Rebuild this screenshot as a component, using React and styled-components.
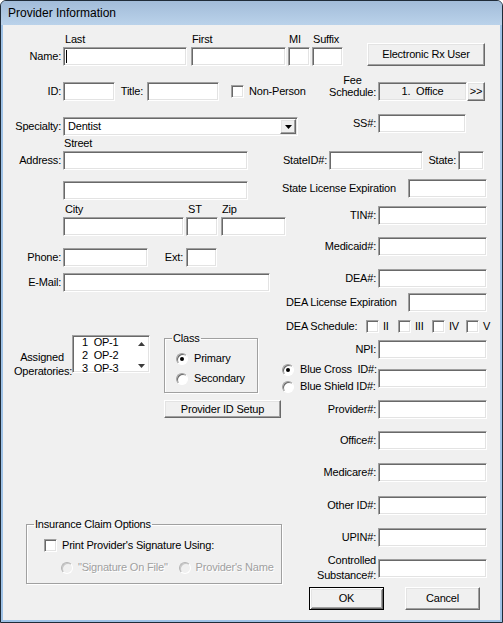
import React from "react";
import styled, { createGlobalStyle, css } from "styled-components";

const GlobalStyle = createGlobalStyle`
  html, body {
    margin: 0;
    padding: 0;
    background: #ffffff;
  }
  body {
    font-family: "Liberation Sans", Arial, sans-serif;
  }
`;

const sunken = css`
  border: 1px solid;
  border-color: #a0a0a0 #ffffff #ffffff #a0a0a0;
  box-shadow: inset 1px 1px 0 #696969, inset -1px -1px 0 #e3e3e3;
`;

const raised = css`
  border: 1px solid;
  border-color: #ffffff #696969 #696969 #ffffff;
  box-shadow: inset -1px -1px 0 #a0a0a0, inset 1px 1px 0 #e3e3e3;
`;

const Window = styled.div`
  width: 503px;
  height: 623px;
  box-sizing: border-box;
  border: 1px solid #1f2b38;
  border-radius: 6px 6px 0 0;
  background: #9fc2e6;
  display: flex;
  flex-direction: column;
  overflow: hidden;
`;

const TitleBar = styled.div`
  flex: none;
  height: 24px;
  display: flex;
  align-items: center;
  padding-left: 7px;
  background: linear-gradient(#a2bcd9, #bad2ea);
  font-size: 12px;
  color: #000;
`;

const Client = styled.div`
  flex: 1;
  margin: 0 2px 2px;
  background: #f0f0f0;
  font-size: 11px;
  line-height: 13px;
  letter-spacing: -0.2px;
  color: #000;
`;

const Row = styled.div`
  display: flex;
  align-items: ${(p) => p.$align || "center"};
  margin-top: ${(p) => p.$top || 0}px;
  ${(p) => p.$h && `height: ${p.$h}px;`}
`;

const Columns = styled.div`
  display: flex;
  align-items: flex-start;
`;

const LeftCol = styled.div`
  flex: none;
  width: 277px;
  display: flex;
  flex-direction: column;
`;

const RightCol = styled.div`
  flex: 1;
  display: flex;
  flex-direction: column;
`;

const Cell = styled.div`
  flex: none;
  box-sizing: border-box;
  width: ${(p) => p.$w}px;
  margin-left: ${(p) => p.$ml || 0}px;
  margin-top: ${(p) => p.$mt || 0}px;
  padding-right: ${(p) => (p.$pr ?? 2)}px;
  padding-left: ${(p) => p.$pl || 0}px;
  padding-bottom: ${(p) => p.$pb || 0}px;
  text-align: ${(p) => p.$align || "right"};
  line-height: ${(p) => p.$lh || 13}px;
  white-space: pre;
`;

const Stack = styled.div`
  flex: none;
  display: flex;
  flex-direction: column;
  margin-left: ${(p) => p.$ml || 0}px;
`;

const Caption = styled.div`
  height: 14px;
  padding-left: ${(p) => (p.$pl ?? 2)}px;
  white-space: nowrap;
`;

const Edit = styled.div`
  flex: none;
  box-sizing: border-box;
  width: ${(p) => p.$w}px;
  height: ${(p) => p.$h || 19}px;
  margin-left: ${(p) => p.$ml || 0}px;
  background: ${(p) => (p.$grey ? "#f0f0f0" : "#ffffff")};
  display: flex;
  align-items: center;
  justify-content: ${(p) => (p.$center ? "center" : "flex-start")};
  white-space: pre;
  ${sunken}
`;

const Caret = styled.span`
  width: 1px;
  height: 13px;
  margin-left: 2px;
  background: #000;
`;

const Button = styled.div`
  flex: none;
  box-sizing: border-box;
  width: ${(p) => p.$w}px;
  height: ${(p) => p.$h || 23}px;
  margin-left: ${(p) => p.$ml || 0}px;
  margin-top: ${(p) => p.$mt || 0}px;
  align-self: ${(p) => p.$self || "auto"};
  display: flex;
  align-items: center;
  justify-content: center;
  background: #f0f0f0;
  white-space: pre;
  ${raised}
  ${(p) =>
    p.$default &&
    css`
      border-color: #000;
      box-shadow: inset 1px 1px 0 #ffffff, inset -1px -1px 0 #696969,
        inset 2px 2px 0 #e3e3e3, inset -2px -2px 0 #a0a0a0;
    `}
`;

const Check = styled.span`
  flex: none;
  box-sizing: border-box;
  width: 13px;
  height: 13px;
  margin-left: ${(p) => p.$ml || 0}px;
  background: #ffffff;
  ${sunken}
`;

const Radio = styled.span`
  flex: none;
  box-sizing: border-box;
  width: 12px;
  height: 12px;
  margin-left: ${(p) => p.$ml || 0}px;
  border-radius: 50%;
  border: 1px solid;
  border-color: ${(p) =>
    p.$disabled ? "#b4b4b4 #ffffff #ffffff #b4b4b4" : "#a0a0a0 #ffffff #ffffff #a0a0a0"};
  box-shadow: inset 1px 1px 0 ${(p) => (p.$disabled ? "#c8c8c8" : "#696969")};
  background: ${(p) => (p.$disabled ? "#f0f0f0" : "#ffffff")};
  display: flex;
  align-items: center;
  justify-content: center;
`;

const Dot = styled.span`
  width: 4px;
  height: 4px;
  border-radius: 50%;
  background: #000;
`;

const Text = styled.span`
  flex: none;
  margin-left: ${(p) => p.$ml || 0}px;
  white-space: pre;
  color: ${(p) => (p.$disabled ? "#a0a0a0" : "#000")};
  ${(p) => p.$disabled && "text-shadow: 1px 1px 0 #ffffff;"}
`;

const Option = styled.div`
  flex: none;
  display: flex;
  align-items: center;
  width: ${(p) => (p.$w ? `${p.$w}px` : "auto")};
  height: ${(p) => p.$h || 13}px;
  margin-left: ${(p) => p.$ml || 0}px;
  margin-top: ${(p) => p.$mt || 0}px;
`;

const FeeLabel = styled.div`
  flex: none;
  width: 47px;
  align-self: flex-end;
  margin-bottom: 3px;
  text-align: center;
  line-height: 12px;
`;

const Combo = styled.div`
  flex: none;
  box-sizing: border-box;
  width: ${(p) => p.$w}px;
  height: 19px;
  margin-top: ${(p) => p.$mt || 0}px;
  padding: 1px;
  background: #ffffff;
  display: flex;
  align-items: stretch;
  ${sunken}
`;

const ComboText = styled.span`
  flex: 1;
  padding-left: 3px;
  line-height: 15px;
`;

const ComboArrow = styled.span`
  flex: none;
  box-sizing: border-box;
  width: 16px;
  display: flex;
  align-items: center;
  justify-content: center;
  background: #f0f0f0;
  ${raised}
`;

const ListBox = styled.div`
  flex: none;
  box-sizing: border-box;
  width: 78px;
  height: 38px;
  margin-left: 2px;
  background: #ffffff;
  display: flex;
  overflow: hidden;
  ${sunken}
`;

const ListItems = styled.div`
  flex: 1;
  padding-left: 9px;
  line-height: 13px;
  white-space: pre;
`;

const ScrollBar = styled.div`
  flex: none;
  width: 16px;
  display: flex;
  flex-direction: column;
  justify-content: space-between;
  align-items: center;
  padding: 6px 0 4px;
`;

const Group = styled.fieldset`
  flex: none;
  box-sizing: border-box;
  width: ${(p) => p.$w}px;
  height: ${(p) => p.$h}px;
  margin: ${(p) => p.$mt || 0}px 0 0 ${(p) => p.$ml || 0}px;
  padding: 0;
  min-inline-size: 0;
  border: 1px solid #a0a0a0;
  box-shadow: inset 1px 1px 0 #ffffff, 1px 1px 0 #ffffff;
`;

const Legend = styled.legend`
  margin-left: 7px;
  padding: 0 1px;
  line-height: 13px;
  font-size: 11px;
`;

const RadioStack = styled.div`
  flex: none;
  width: 98px;
  padding-bottom: 1px;
  display: flex;
  flex-direction: column;
`;

const ArrowDown = ({ color = "#000" }) => (
  <svg width="7" height="4" viewBox="0 0 7 4">
    <path d="M0 0h7L3.5 4z" fill={color} />
  </svg>
);

const ArrowUp = ({ color = "#000" }) => (
  <svg width="7" height="4" viewBox="0 0 7 4">
    <path d="M3.5 0L7 4H0z" fill={color} />
  </svg>
);

const idFields = [
  { label: "TIN#:", top: 8 },
  { label: "Medicaid#:", top: 12 },
  { label: "DEA#:", top: 13 },
];

const lowerIds = [
  { label: "Provider#:", top: 4 },
  { label: "Office#:", top: 12 },
  { label: "Medicare#:", top: 13 },
  { label: "Other ID#:", top: 14 },
  { label: "UPIN#:", top: 13 },
];

const schedules = [
  { label: "II", w: 32 },
  { label: "III", w: 34 },
  { label: "IV", w: 34 },
  { label: "V" },
];

function IdRow({ label, top }) {
  return (
    <Row $top={top}>
      <Cell $w={98}>{label}</Cell>
      <Edit $w={109} />
    </Row>
  );
}

export default function App() {
  return (
    <>
      <GlobalStyle />
      <Window>
        <TitleBar>Provider Information</TitleBar>
        <Client>
          {/* name */}
          <Row $top={8} $align="flex-end">
            <Cell $w={60} $lh={19}>Name:</Cell>
            <Stack>
              <Caption>Last</Caption>
              <Edit $w={124}>
                <Caret />
              </Edit>
            </Stack>
            <Stack $ml={4}>
              <Caption $pl={1}>First</Caption>
              <Edit $w={95} />
            </Stack>
            <Stack $ml={2}>
              <Caption $pl={1}>MI</Caption>
              <Edit $w={22} />
            </Stack>
            <Stack $ml={2}>
              <Caption $pl={1}>Suffix</Caption>
              <Edit $w={31} />
            </Stack>
            <Button $w={118} $ml={24} $mt={10} $self="flex-start">
              Electronic Rx User
            </Button>
          </Row>

          {/* id / title / fee schedule */}
          <Row $top={16} $h={19}>
            <Cell $w={60}>ID:</Cell>
            <Edit $w={52} />
            <Cell $w={32} $pr={4}>Title:</Cell>
            <Edit $w={72} />
            <Option $w={110}>
              <Check $ml={12} />
              <Text $ml={5}>Non-Person</Text>
            </Option>
            <FeeLabel>
              Fee
              <br />
              Schedule:
            </FeeLabel>
            <Edit $w={89} $ml={2} $grey $center>
              {"1.  Office"}
            </Edit>
            <Button $w={18} $h={19}>
              {">>"}
            </Button>
          </Row>

          {/* specialty */}
          <Row $top={13} $align="flex-start">
            <Cell $w={60} $mt={3} $lh={19}>
              Specialty:
            </Cell>
            <Combo $w={235} $mt={3}>
              <ComboText>Dentist</ComboText>
              <ComboArrow>
                <ArrowDown />
              </ComboArrow>
            </Combo>
            <Cell $w={80} $lh={19}>SS#:</Cell>
            <Edit $w={88} />
          </Row>

          <Columns>
            <LeftCol>
              <Row $top={1} $align="flex-end">
                <Cell $w={60} $lh={19}>Address:</Cell>
                <Stack>
                  <Caption $pl={1}>Street</Caption>
                  <Edit $w={185} />
                </Stack>
              </Row>
              <Row $top={11}>
                <Edit $w={185} $ml={60} />
              </Row>
              <Row $top={3} $align="flex-end">
                <Stack $ml={60}>
                  <Caption>City</Caption>
                  <Edit $w={121} />
                </Stack>
                <Stack $ml={2}>
                  <Caption $pl={2}>ST</Caption>
                  <Edit $w={32} />
                </Stack>
                <Stack $ml={3}>
                  <Caption $pl={1}>Zip</Caption>
                  <Edit $w={65} />
                </Stack>
              </Row>
              <Row $top={12}>
                <Cell $w={60}>Phone:</Cell>
                <Edit $w={85} />
                <Cell $w={38} $pr={3}>Ext:</Cell>
                <Edit $w={31} />
              </Row>
              <Row $top={6}>
                <Cell $w={60}>E-Mail:</Cell>
                <Edit $w={207} />
              </Row>

              {/* operatories and class */}
              <Row $top={43} $align="flex-start">
                <Cell $w={56} $ml={11} $mt={15} $lh={14} $pr={0} $align="center">
                  {"Assigned\nOperatories:"}
                </Cell>
                <ListBox>
                  <ListItems>{"1  OP-1\n2  OP-2\n3  OP-3"}</ListItems>
                  <ScrollBar>
                    <ArrowUp color="#3c3c3c" />
                    <ArrowDown color="#3c3c3c" />
                  </ScrollBar>
                </ListBox>
                <Group $w={94} $h={61} $ml={14} $mt={-3}>
                  <Legend>Class</Legend>
                  <Option $ml={11} $mt={7}>
                    <Radio>
                      <Dot />
                    </Radio>
                    <Text $ml={6}>Primary</Text>
                  </Option>
                  <Option $ml={11} $mt={7}>
                    <Radio />
                    <Text $ml={6}>Secondary</Text>
                  </Option>
                </Group>
              </Row>
              <Row $top={7}>
                <Button $w={117} $h={18} $ml={161}>
                  Provider ID Setup
                </Button>
              </Row>

              {/* claim options */}
              <Row $top={100}>
                <Group $w={256} $h={66} $ml={23}>
                  <Legend>Insurance Claim Options</Legend>
                  <Option $ml={17} $mt={8}>
                    <Check />
                    <Text $ml={5}>Print Provider's Signature Using:</Text>
                  </Option>
                  <Option $ml={34} $mt={9}>
                    <Radio $disabled />
                    <Text $ml={5} $disabled>
                      "Signature On File"
                    </Text>
                    <Radio $disabled $ml={11} />
                    <Text $ml={5} $disabled>
                      Provider's Name
                    </Text>
                  </Option>
                </Group>
              </Row>
            </LeftCol>

            <RightCol>
              <Row $top={15}>
                <Cell $w={49}>StateID#:</Cell>
                <Edit $w={94} />
                <Cell $w={35}>State:</Cell>
                <Edit $w={26} />
              </Row>
              <Row $top={9}>
                <Cell $w={128} $align="left" $pl={2} $pr={0}>
                  State License Expiration
                </Cell>
                <Edit $w={79} />
              </Row>
              {idFields.map((f) => (
                <IdRow key={f.label} {...f} />
              ))}
              <Row $top={5}>
                <Cell $w={128} $align="left" $pl={6} $pr={0}>
                  DEA License Expiration
                </Cell>
                <Edit $w={79} />
              </Row>
              <Row $top={8} $h={13}>
                <Cell $w={86} $align="left" $pl={6} $pr={0}>
                  DEA Schedule:
                </Cell>
                {schedules.map((s) => (
                  <Option key={s.label} $w={s.w}>
                    <Check />
                    <Text $ml={4}>{s.label}</Text>
                  </Option>
                ))}
              </Row>
              <IdRow label="NPI:" top={7} />
              <Row $top={2}>
                <RadioStack>
                  <Option $h={17} $ml={2}>
                    <Radio>
                      <Dot />
                    </Radio>
                    <Text $ml={6}>Blue Cross  ID#:</Text>
                  </Option>
                  <Option $h={17} $ml={2}>
                    <Radio />
                    <Text $ml={6}>Blue Shield ID#:</Text>
                  </Option>
                </RadioStack>
                <Edit $w={109} />
              </Row>
              {lowerIds.map((f) => (
                <IdRow key={f.label} {...f} />
              ))}
              <Row $top={6}>
                <Cell $w={98} $lh={15} $pb={1}>
                  {"Controlled\nSubstance#:"}
                </Cell>
                <Edit $w={109} />
              </Row>
              <Row $top={3}>
                <Button $w={75} $ml={29} $default>
                  OK
                </Button>
                <Button $w={75} $ml={21}>
                  Cancel
                </Button>
              </Row>
            </RightCol>
          </Columns>
        </Client>
      </Window>
    </>
  );
}
